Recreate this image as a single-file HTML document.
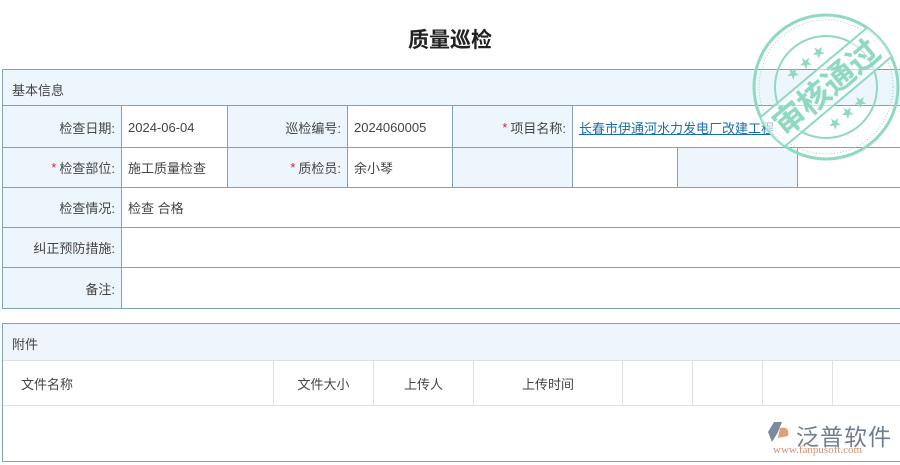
<!DOCTYPE html>
<html><head><meta charset="utf-8"><style>
*{margin:0;padding:0;box-sizing:border-box}
body{width:900px;height:465px;background:#fff;font-family:"Liberation Sans","Noto Sans CJK SC",sans-serif;font-size:13px;color:#444;position:relative;overflow:hidden}
.a{position:absolute}
.title{left:0;width:900px;top:24px;text-align:center;font-size:21px;font-weight:bold;color:#222}
.box{border:1px solid #7fa3b4}
.lb{background:#eef6fd}
.c{position:absolute;border-right:1px solid #7fa3b4;border-bottom:1px solid #7fa3b4;display:flex;align-items:center;padding:0 6px}
.r{justify-content:flex-end}
.s{color:#d22;margin-right:3px}
.g{position:absolute;border-right:1px solid #e0e0e0;display:flex;align-items:center}
</style></head><body>
<div class="a title">质量巡检</div>
<div class="a box" style="left:2px;top:69px;width:920px;height:240px;"></div>
<div class="a lb" style="left:3px;top:70px;width:897px;height:36px;border-bottom:1px solid #7fa3b4;padding:10px 9px">基本信息</div>
<div class="c r lb" style="left:3px;top:106px;width:119px;height:42px;padding-top:2px">检查日期:</div>
<div class="c" style="left:122px;top:106px;width:106px;height:42px;padding-top:2px">2024-06-04</div>
<div class="c r lb" style="left:228px;top:106px;width:120px;height:42px;padding-top:2px">巡检编号:</div>
<div class="c" style="left:348px;top:106px;width:105px;height:42px;padding-top:2px">2024060005</div>
<div class="c r lb" style="left:453px;top:106px;width:120px;height:42px;padding-top:2px"><span class="s">*</span>项目名称:</div>
<div class="c" style="left:573px;top:106px;width:340px;height:42px;padding-top:2px;color:#1a6fa8;text-decoration:underline">长春市伊通河水力发电厂改建工程</div>
<div class="c r lb" style="left:3px;top:148px;width:119px;height:40px"><span class="s">*</span>检查部位:</div>
<div class="c" style="left:122px;top:148px;width:106px;height:40px">施工质量检查</div>
<div class="c r lb" style="left:228px;top:148px;width:120px;height:40px"><span class="s">*</span>质检员:</div>
<div class="c" style="left:348px;top:148px;width:105px;height:40px">余小琴</div>
<div class="c lb" style="left:453px;top:148px;width:120px;height:40px"></div>
<div class="c" style="left:573px;top:148px;width:105px;height:40px"></div>
<div class="c lb" style="left:678px;top:148px;width:120px;height:40px"></div>
<div class="c" style="left:798px;top:148px;width:120px;height:40px"></div>
<div class="c r lb" style="left:3px;top:188px;width:119px;height:40px">检查情况:</div>
<div class="c" style="left:122px;top:188px;width:800px;height:40px">检查 合格</div>
<div class="c r lb" style="left:3px;top:228px;width:119px;height:40px">纠正预防措施:</div>
<div class="c" style="left:122px;top:228px;width:800px;height:40px"></div>
<div class="c r lb" style="left:3px;top:268px;width:119px;height:40px;border-bottom:none">备注:</div>
<div class="c" style="left:122px;top:268px;width:800px;height:40px;border-bottom:none"></div>

<div class="a" style="left:2px;top:323px;width:920px;height:139px;border:1px solid #7fa3b4"></div>
<div class="a" style="left:3px;top:324px;width:897px;height:37px;background:#eff5fd;border-bottom:1px solid #e0e0e0;padding:10px 9px">附件</div>
<div class="a" style="left:3px;top:361px;width:897px;height:45px;border-bottom:1px solid #e0e0e0"></div>
<div class="g" style="left:3px;top:361px;width:271px;height:44px;padding-left:18px">文件名称</div>
<div class="g" style="left:274px;top:361px;width:100px;height:44px;justify-content:center">文件大小</div>
<div class="g" style="left:374px;top:361px;width:100px;height:44px;justify-content:center">上传人</div>
<div class="g" style="left:474px;top:361px;width:149px;height:44px;justify-content:center">上传时间</div>
<div class="g" style="left:623px;top:361px;width:70px;height:44px"></div>
<div class="g" style="left:693px;top:361px;width:70px;height:44px"></div>
<div class="g" style="left:763px;top:361px;width:70px;height:44px"></div>

<svg class="a" style="left:750px;top:10px" width="152" height="155" viewBox="0 0 152 155">
<defs><clipPath id="cp"><circle cx="76" cy="77" r="72"/></clipPath></defs>
<g stroke="#8fd8c2" fill="none">
<circle cx="76" cy="77" r="72" stroke-width="3"/>
<circle cx="76" cy="77" r="67" stroke-width="1" stroke-dasharray="1 2"/>
<circle cx="76" cy="77" r="51" stroke-width="2"/>
<g transform="rotate(-40 76 77)" clip-path="url(#cp)">
<rect x="-20" y="58" width="192" height="38" fill="#fff" fill-opacity="0.55" stroke="none"/>
<line x1="-20" y1="58" x2="172" y2="58" stroke-width="2"/>
<line x1="-20" y1="96" x2="172" y2="96" stroke-width="2"/>
</g>
<g transform="rotate(-40 76 77)">
<text x="76" y="89" text-anchor="middle" font-size="32" font-weight="bold" fill="#8fd8c2" stroke="none" font-family="Noto Sans CJK SC,sans-serif">审核通过</text>
<text x="76" y="50" text-anchor="middle" font-size="13" fill="#8fd8c2" stroke="none">★ ★ ★</text>
<text x="76" y="115" text-anchor="middle" font-size="13" fill="#8fd8c2" stroke="none">★ ★ ★</text>
</g>
</g></svg>

<svg class="a" style="left:768px;top:420px" width="24" height="24" viewBox="0 0 24 24"><path d="M6 2 L14 2 L10 12 L4 22 L0 12Z" fill="#7a8aa0"/><path d="M12 8 Q22 6 20 16 L10 18Z" fill="#e0a070"/></svg>
<div class="a" style="left:796px;top:418px;font-size:23px;color:#6e7e90;letter-spacing:1px">泛普软件</div>
<div class="a" style="left:773px;top:444px;font-size:11px;color:#d09070;font-family:'Liberation Serif',serif">www.fanpusoft.com</div>
</body></html>
